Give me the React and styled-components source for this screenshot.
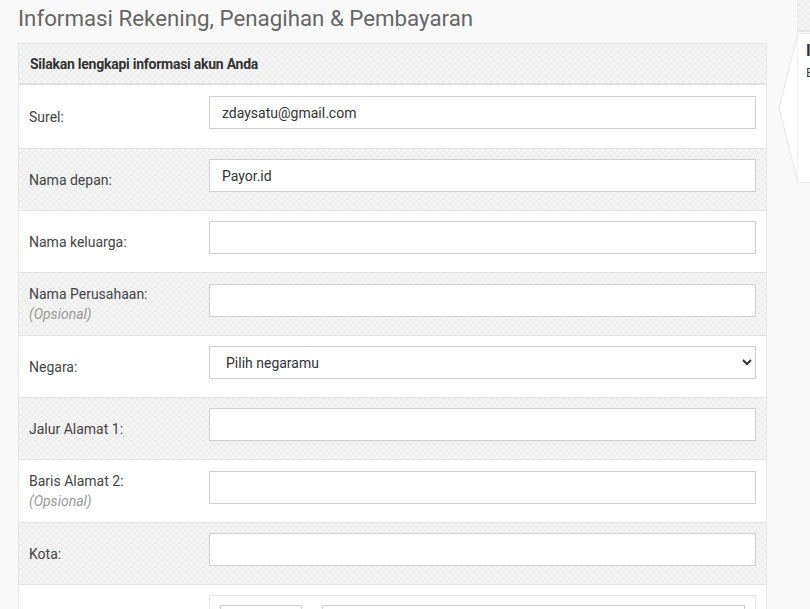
import React from 'react';
import styled, { createGlobalStyle } from 'styled-components';

const GlobalStyle = createGlobalStyle`
  body {
    margin: 0;
    background: #f9f9f9;
    font-family: Roboto, "Liberation Sans", sans-serif;
    overflow: hidden;
  }
`;

const checker = `
  background-color: #f3f3f3;
  background-image: repeating-conic-gradient(#eeeeee 0% 25%, #f5f5f5 0% 50%);
  background-size: 6px 6px;
`;

const Page = styled.div`
  display: flex;
  align-items: flex-start;
  width: 1000px;
`;

const Main = styled.div`
  width: 749px;
  margin-left: 18px;
`;

const Title = styled.h1`
  margin: 0;
  height: 43px;
  line-height: 36px;
  font-size: 22.3px;
  font-weight: 400;
  color: #666;
`;

const Panel = styled.div`
  border: 1px solid #e6e6e6;
  background: #fff;
`;

const PanelHeader = styled.div`
  ${checker}
  height: 39px;
  display: flex;
  align-items: center;
  padding-left: 11px;
  border-bottom: 2px solid #e0e0e0;
  font-size: 14px;
  font-weight: 700;
  letter-spacing: -0.25px;
  color: #333;
`;

const Row = styled.div`
  display: grid;
  grid-template-columns: 190px 1fr;
  align-items: center;
  height: ${p => p.$h || 62}px;
  padding-right: 10px;
  border-top: ${p => (p.$first ? 'none' : '1px solid #e3e3e3')};
  box-sizing: border-box;
  ${p => (p.$gray ? checker : 'background: #fff;')}
`;

const Label = styled.div`
  padding-left: 10px;
  font-size: 14px;
  color: #444;
  line-height: 20px;
`;

const Optional = styled.div`
  font-style: italic;
  color: #999;
`;

const Field = styled.input`
  box-sizing: border-box;
  width: 100%;
  height: 33px;
  margin-bottom: 8px;
  border: 1px solid #cfcfcf;
  background: #fff;
  padding: 0 12px;
  font-family: Roboto, "Liberation Sans", sans-serif;
  font-size: 14px;
  color: #333;
  outline: none;
`;

const Select = styled.select`
  box-sizing: border-box;
  width: 100%;
  height: 33px;
  margin-bottom: 8px;
  border: 1px solid #cfcfcf;
  border-radius: 0;
  background: #fff;
  padding: 0 12px;
  font-family: Roboto, "Liberation Sans", sans-serif;
  font-size: 14px;
  color: #333;
  outline: none;
`;

const Group = styled.div`
  align-self: start;
  margin-top: 10px;
  height: 40px;
  border: 1px solid #e6e6e6;
  display: flex;
  gap: 20px;
  padding: 9px 10px 0;
  box-sizing: border-box;
`;

const SmallField = styled.div`
  width: ${p => (p.$grow ? 'auto' : '80px')};
  flex: ${p => (p.$grow ? 1 : 'none')};
  height: 30px;
  border: 1px solid #cfcfcf;
  background: #fff;
`;

const Sidebar = styled.div`
  margin-left: 11px;
  width: 200px;
`;

const SideTop = styled.div`
  ${checker}
  margin-left: 19px;
  height: 30px;
  border-bottom: 2px solid #e6e6e6;
  border-left: 1px solid #ececec;
`;

const Card = styled.div`
  display: flex;
  margin-top: 1px;
  height: 150px;
`;

const Pointer = styled.svg`
  width: 20px;
  height: 150px;
  flex: none;
`;

const CardBody = styled.div`
  flex: 1;
  background: #fff;
  border-top: 1px solid #ececec;
  border-bottom: 1px solid #ececec;
  padding: 6px 8px;
`;

const CardTitle = styled.div`
  font-size: 16px;
  font-weight: 700;
  color: #333;
  line-height: 22px;
`;

const CardText = styled.div`
  font-size: 13px;
  color: #444;
  line-height: 22px;
`;

const fields = [
  { label: 'Surel:', value: 'zdaysatu@gmail.com' },
  { label: 'Nama depan:', value: 'Payor.id' },
  { label: 'Nama keluarga:', value: '' },
  { label: 'Nama Perusahaan:', value: '', optional: true },
  { label: 'Negara:', select: true },
  { label: 'Jalur Alamat 1:', value: '' },
  { label: 'Baris Alamat 2:', value: '', optional: true },
  { label: 'Kota:', value: '' },
];

export default function App() {
  return (
    <>
      <GlobalStyle />
      <Page>
        <Main>
          <Title>Informasi Rekening, Penagihan &amp; Pembayaran</Title>
          <Panel>
            <PanelHeader>Silakan lengkapi informasi akun Anda</PanelHeader>
            {fields.map((f, i) => (
              <Row key={f.label} $gray={i % 2 === 1} $first={i === 0} $h={i % 3 === 0 ? 63 : 62}>
                <Label>
                  {f.label}
                  {f.optional && <Optional>(Opsional)</Optional>}
                </Label>
                {f.select ? (
                  <Select defaultValue="">
                    <option value="">Pilih negaramu</option>
                    <option value="id">Indonesia</option>
                  </Select>
                ) : (
                  <Field type="text" defaultValue={f.value} />
                )}
              </Row>
            ))}
            <Row $h={80}>
              <Label />
              <Group>
                <SmallField />
                <SmallField $grow />
              </Group>
            </Row>
          </Panel>
        </Main>
        <Sidebar>
          <SideTop />
          <Card>
            <Pointer viewBox="0 0 20 150">
              <polygon points="20,0 1,75 20,150" fill="#fff" stroke="#e6e6e6" strokeWidth="1" />
            </Pointer>
            <CardBody>
              <CardTitle>Informasi Pesanan</CardTitle>
              <CardText>Belum ada item</CardText>
            </CardBody>
          </Card>
        </Sidebar>
      </Page>
    </>
  );
}
